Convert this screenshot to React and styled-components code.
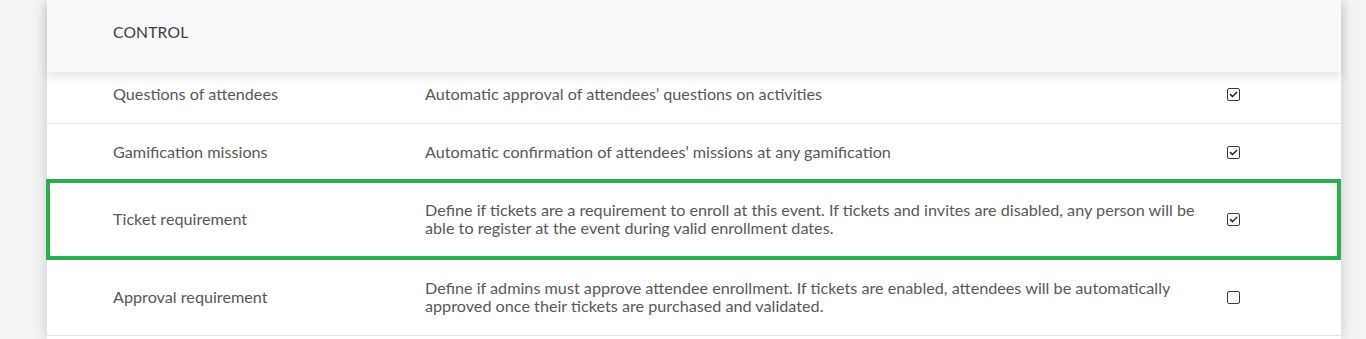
import React from "react";
import styled, { createGlobalStyle } from "styled-components";

const GlobalStyle = createGlobalStyle`
  html, body {
    margin: 0;
    padding: 0;
    background: #f4f4f4;
    font-family: Lato, "Open Sans", sans-serif;
  }
`

const Page = styled.div`
  padding: 0 25px 0 47px;
  height: 339px;
  overflow: hidden;
`

const Card = styled.div`
  background: #ffffff;
  box-shadow: 0 0 14px rgba(0, 0, 0, 0.18);
  min-height: 100%;
`

const Header = styled.div`
  position: relative;
  z-index: 1;
  box-sizing: border-box;
  height: 72px;
  padding: 24px 0 0 66px;
  background: #f8f9fb;
  box-shadow: 0 5px 10px rgba(0, 0, 0, 0.1);
  font-size: 15.6px;
  line-height: 16px;
  color: #3d3d3d;
  letter-spacing: 0.2px;
`

const Body = styled.div`
  display: flex;
  flex-direction: column;
`

const Row = styled.div`
  display: grid;
  grid-template-columns: 312px 776px auto;
  align-items: center;
  padding: ${p => (p.$highlight ? "18px 0 19px 63px" : "19px 0 20px 66px")};
  border-bottom: ${p => (p.$highlight ? "4px solid #2bae4f" : "1px solid #e2e2e2")};
  border-top: ${p => (p.$highlight ? "4px solid #2bae4f" : "none")};
  border-left: ${p => (p.$highlight ? "4px solid #2bae4f" : "none")};
  border-right: ${p => (p.$highlight ? "4px solid #2bae4f" : "none")};
  margin: ${p => (p.$highlight ? "-3px 0 0 -1px" : "0")};
  font-size: 16.2px;
  line-height: 18px;
  color: #585858;

  &:first-child {
    padding-top: 13px;
  }
`

const Label = styled.div`
  color: #585858;
`

const Description = styled.div`
  color: #585858;
  padding-right: 4px;
`

const CheckCell = styled.div`
  padding-left: 26px;
  display: flex;
  align-items: center;
`

const Box = styled.span`
  display: inline-flex;
  align-items: center;
  justify-content: center;
  box-sizing: border-box;
  width: 13px;
  height: 13px;
  border: 1.5px solid #3a3a3a;
  border-radius: 2px;
  background: #fff;
`

function Checkbox({ checked }) {
  return (
    <Box>
      {checked && (
        <svg width="9" height="9" viewBox="0 0 9 9">
          <path d="M1.5 4.6 L3.6 6.6 L7.6 2.4" fill="none" stroke="#2a2a2a" strokeWidth="1.5" strokeLinecap="round" strokeLinejoin="round" />
        </svg>
      )}
    </Box>
  );
}

const rows = [
  {
    label: "Questions of attendees",
    desc: "Automatic approval of attendees’ questions on activities",
    checked: true,
  },
  {
    label: "Gamification missions",
    desc: "Automatic confirmation of attendees’ missions at any gamification",
    checked: true,
  },
  {
    label: "Ticket requirement",
    desc: "Define if tickets are a requirement to enroll at this event. If tickets and invites are disabled, any person will be able to register at the event during valid enrollment dates.",
    checked: true,
    highlight: true,
  },
  {
    label: "Approval requirement",
    desc: "Define if admins must approve attendee enrollment. If tickets are enabled, attendees will be automatically approved once their tickets are purchased and validated.",
    checked: false,
  },
];

export default function App() {
  return (
    <Page>
      <GlobalStyle />
      <Card>
        <Header>CONTROL</Header>
        <Body>
          {rows.map(r => (
            <Row key={r.label} $highlight={r.highlight}>
              <Label>{r.label}</Label>
              <Description>{r.desc}</Description>
              <CheckCell>
                <Checkbox checked={r.checked} />
              </CheckCell>
            </Row>
          ))}
        </Body>
      </Card>
    </Page>
  );
}
